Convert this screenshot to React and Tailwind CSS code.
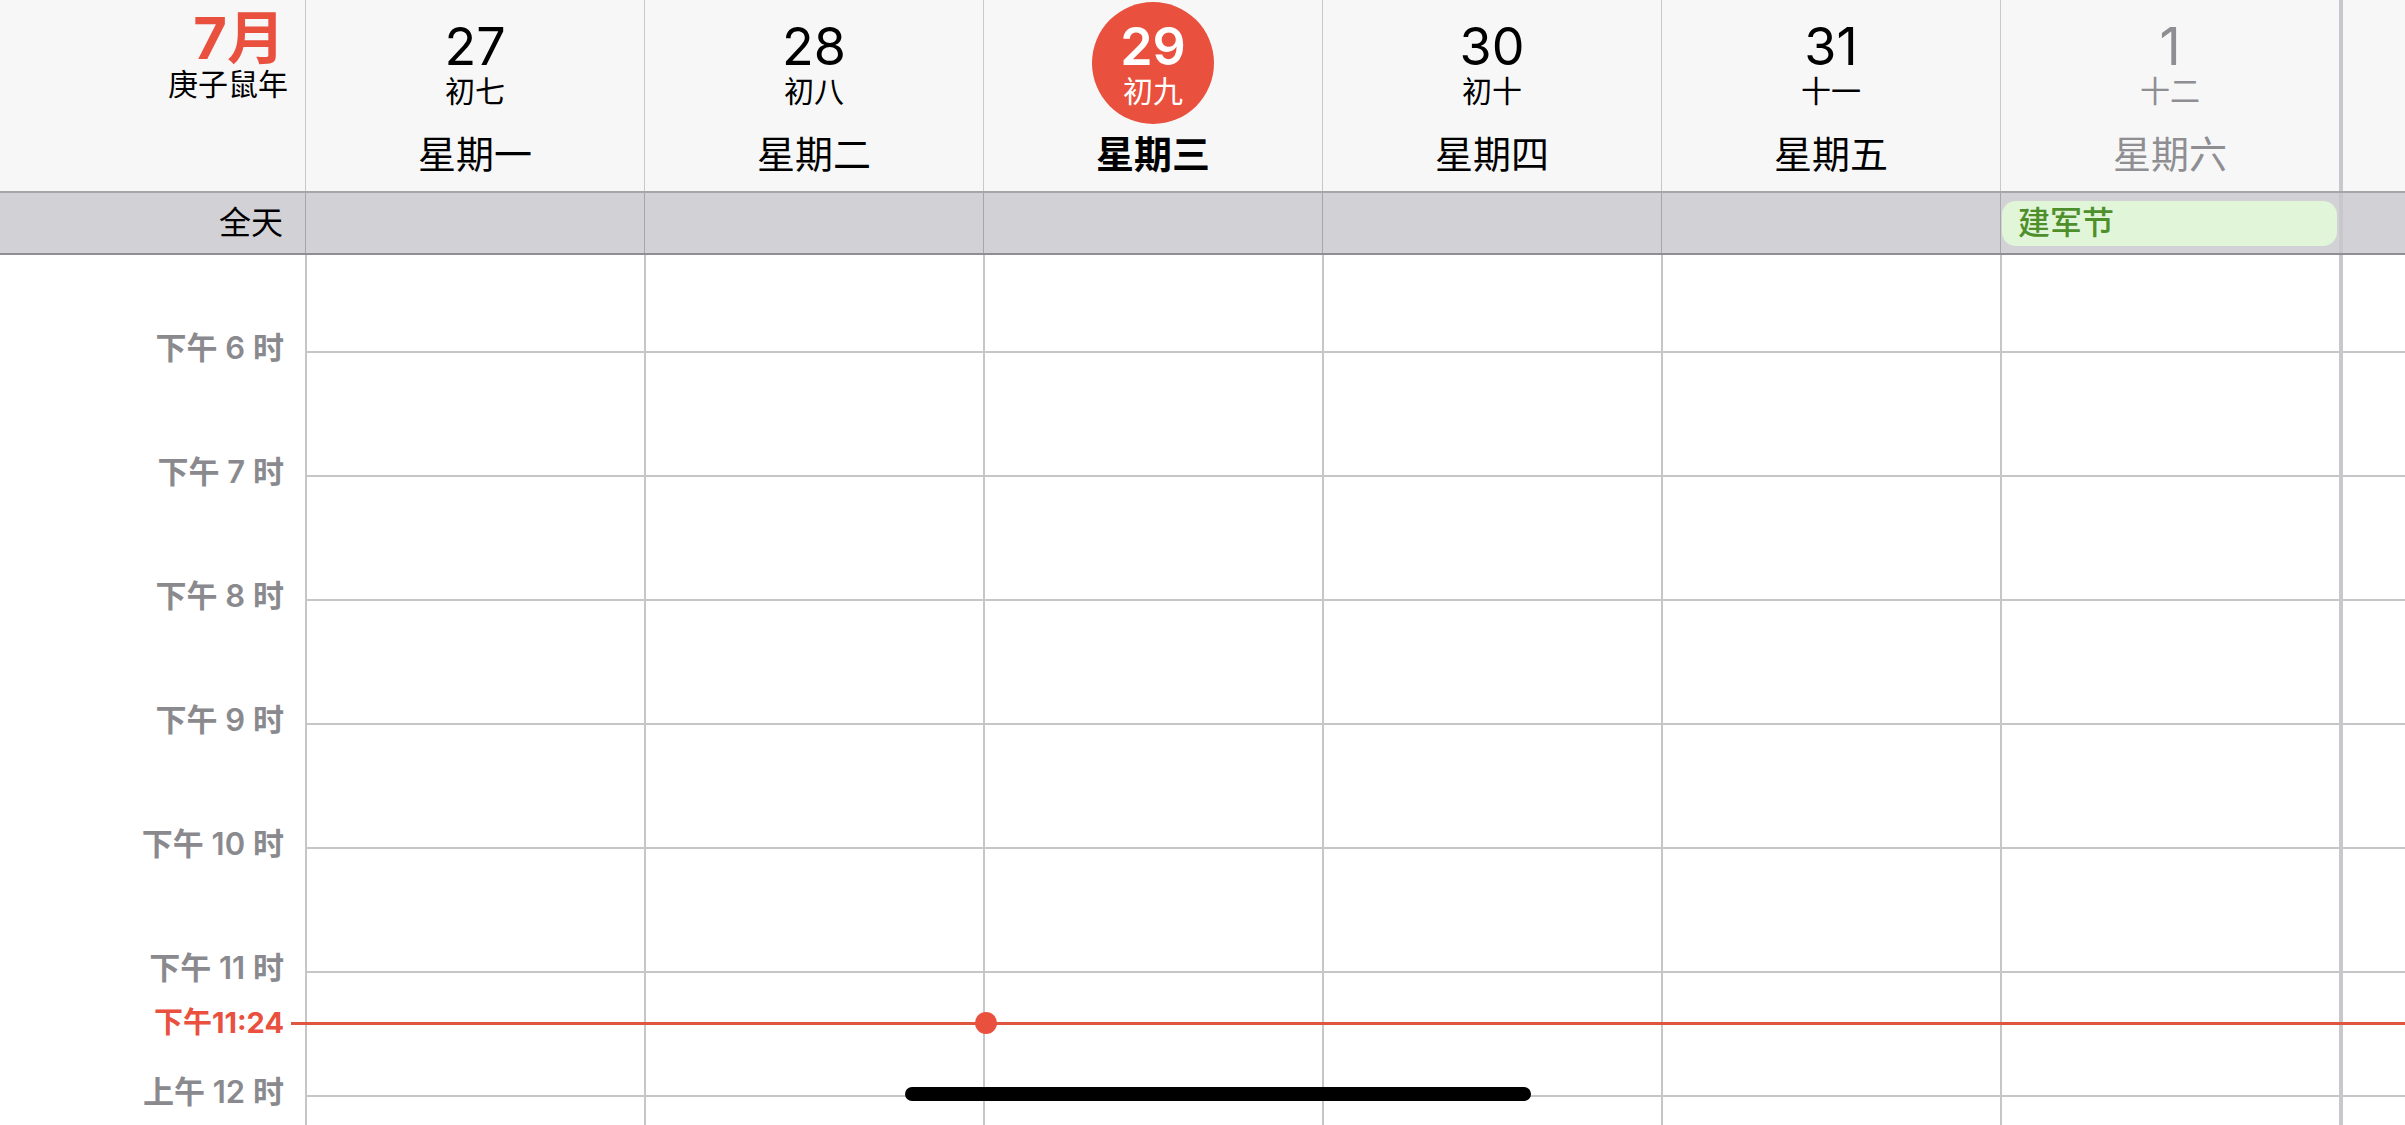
import React from 'react';

const FONT = { fontFamily: 'Inter, "Noto Sans CJK SC", sans-serif' };

const DAYS = [
    { num: '27', lunar: '初七', week: '星期一' },
    { num: '28', lunar: '初八', week: '星期二' },
    { num: '29', lunar: '初九', week: '星期三', today: true },
    { num: '30', lunar: '初十', week: '星期四' },
    { num: '31', lunar: '十一', week: '星期五' },
    { num: '1', lunar: '十二', week: '星期六', muted: true, event: '建军节' },
];

const HOURS = ['下午 6 时', '下午 7 时', '下午 8 时', '下午 9 时', '下午 10 时', '下午 11 时', '上午 12 时'];

const COLS = 'grid grid-cols-[305px_repeat(6,339px)_1fr]';

function DayHeader({ day }) {
    const color = day.today ? 'text-white' : day.muted ? 'text-[#8e8e93]' : 'text-black';
    return (
        <div className="flex flex-col items-center border-l border-[#c8c8cc]">
            <div className={`mt-[2px] flex h-[122px] w-[122px] flex-col items-center justify-center rounded-full ${day.today ? 'bg-[#e9503e]' : ''}`}>
                <div className={`h-[52px] text-[52px] leading-[52px] ${day.today ? 'font-semibold' : 'font-normal'} ${color}`}>{day.num}</div>
                <div className={`mt-[3px] h-[30px] text-[30px] leading-[30px] ${color}`}>{day.lunar}</div>
            </div>
            <div className={`mt-[11px] text-[38px] leading-[38px] ${day.today ? 'font-bold text-black' : day.muted ? 'text-[#8e8e93]' : 'text-black'}`}>
                {day.week}
            </div>
        </div>
    );
}

function HourLines() {
    return HOURS.map((h) => <div key={h} className="h-[124px] shrink-0 border-t-2 border-[#c6c6c8]" />);
}

export default function App() {
    return (
        <div className="relative h-[1125px] w-[2405px] overflow-hidden bg-white" style={FONT}>
            {/* header */}
            <div className={`${COLS} h-[193px] border-b-2 border-[#a5a5aa] bg-[#f7f7f7]`}>
                <div className="flex flex-col items-end">
                    <div className="mt-[11px] pr-[20px] text-[58px] font-bold leading-[54px] text-[#e9503e]">7月</div>
                    <div className="mt-[4px] pr-[17px] text-[30px] leading-[30px] text-black">庚子鼠年</div>
                </div>
                {DAYS.map((d) => <DayHeader key={d.num} day={d} />)}
                <div className="border-l-4 border-[#c7c7cc]" />
            </div>

            {/* all-day row */}
            <div className={`${COLS} h-[62px] border-b-2 border-[#8e8e93] bg-[#d1d1d6]`}>
                <div className="flex items-center justify-end pr-[22px] text-[32px] leading-[32px] text-black">全天</div>
                {DAYS.map((d) => (
                    <div key={d.num} className="flex items-center border-l border-[#a5a5aa] pl-px pr-[2px]">
                        {d.event && (
                            <div className="flex h-[45px] w-full items-center rounded-[14px] bg-[#e1f6d8] pl-[16px] text-[32px] font-medium leading-[32px] text-[#4e8f2c]">
                                {d.event}
                            </div>
                        )}
                    </div>
                ))}
                <div className="border-l-4 border-[#c7c7cc]" />
            </div>

            {/* timeline body */}
            <div className={`${COLS} h-[870px]`}>
                <div className="flex flex-col items-end pt-[77px] pr-[21px]">
                    {HOURS.map((h) => (
                        <div key={h} className="h-[124px] shrink-0 text-[31px] font-semibold leading-[31px] text-[#8a8a8e]">{h}</div>
                    ))}
                </div>
                {DAYS.map((d) => (
                    <div key={d.num} className="flex flex-col border-l-2 border-[#c6c6c8] pt-[96px]">
                        <HourLines />
                    </div>
                ))}
                <div className="flex flex-col border-l-4 border-[#c7c7cc] pt-[96px]">
                    <HourLines />
                </div>
            </div>

            {/* current time indicator */}
            <div className="absolute left-0 right-0 top-[1009px] flex h-[28px] items-center">
                <span className="w-[284px] text-right text-[29px] font-bold leading-[28px] text-[#e9503e]">下午11:24</span>
                <div className="ml-[7px] h-[3px] flex-1 bg-[#e0553f]" />
            </div>
            <div className="absolute left-[975px] top-[1012px] h-[22px] w-[22px] rounded-full bg-[#e9503e]" />

            {/* home indicator */}
            <div className="absolute left-[905px] top-[1087px] h-[14px] w-[626px] rounded-full bg-black" />
        </div>
    );
}
